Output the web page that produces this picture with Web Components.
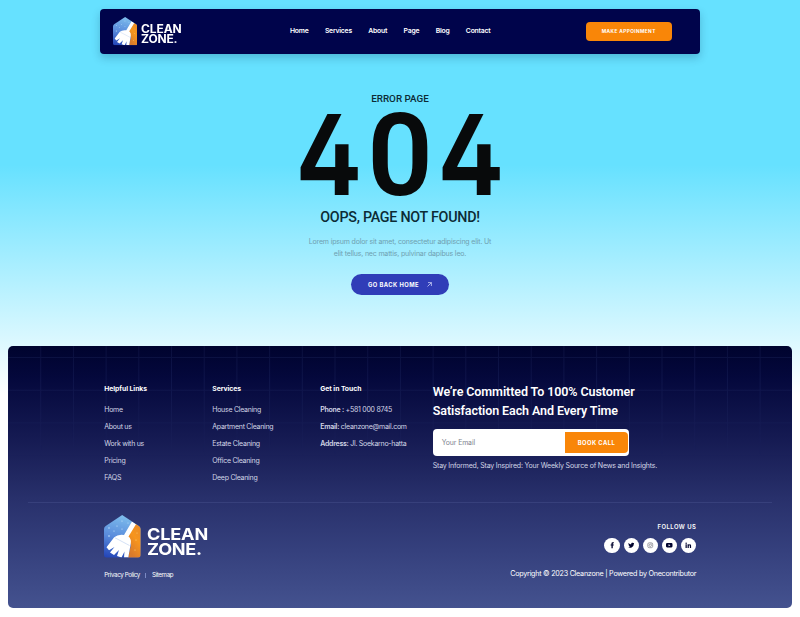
<!DOCTYPE html>
<html lang="en">
<head>
<meta charset="utf-8">
<title>Clean Zone</title>
<style>
html,body{margin:0;height:100%}
body{font-family:Inter,"Liberation Sans",sans-serif;background:#fff}
</style>
</head>
<body>
<error-page></error-page>
<script>
const define = (name, html, init) => customElements.define(name, class extends HTMLElement {
  constructor() {
    super();
    this.attachShadow({mode: 'open'});
  }
  connectedCallback() {
    this.shadowRoot.innerHTML = html;
    if (init) init(this, this.shadowRoot);
  }
});

define('cz-logo', `
<style>
:host{display:flex;align-items:flex-start;--u:1px}
svg{display:block;width:calc(var(--u)*36.5);height:calc(var(--u)*43)}
.t{color:#fff;margin-left:calc(var(--u)*6);padding-top:calc(var(--u)*12);font:700 calc(var(--u)*16.6)/calc(var(--u)*14.9) Inter,sans-serif;transform:scaleX(1.09);transform-origin:0 0}
.t div{white-space:nowrap}
.a{letter-spacing:calc(var(--u)*-.15)}
.b{letter-spacing:calc(var(--u)*-.25)}
</style>
<svg viewBox="0 0 36.5 43">
<defs>
<linearGradient id="b" x1=".4" y1="0" x2=".2" y2="1"><stop offset="0" stop-color="#7dbcec"/><stop offset=".5" stop-color="#5a8cdc"/><stop offset="1" stop-color="#2446b8"/></linearGradient>
<linearGradient id="o" x1="1" y1="0" x2=".5" y2="1"><stop offset="0" stop-color="#e78a2c"/><stop offset=".5" stop-color="#f7951d"/><stop offset="1" stop-color="#d97a2c"/></linearGradient>
<clipPath id="c"><path d="M18.2 0 L34.8 11 Q36.5 12.2 36.5 14 V40 Q36.5 42.5 34 42.5 H2.5 Q0 42.5 0 40 V14 Q0 12.2 1.7 11Z"/></clipPath>
</defs>
<g clip-path="url(#c)">
<path fill="url(#b)" d="M0 0H37V43H0z"/>
<path fill="url(#o)" d="M31.5 8.500 37 12V43H24L27 30 23.500 22Z"/>
<g fill="#c9e8ff"><circle cx="18" cy="6" r=".6"/><circle cx="13" cy="11" r=".6"/><circle cx="5" cy="13" r=".7"/><circle cx="10" cy="16" r=".6"/><circle cx="18" cy="14" r=".6"/><circle cx="5" cy="21" r=".8"/><circle cx="12" cy="22" r=".6"/><circle cx="24" cy="8" r=".5"/></g>
<g fill="#ffd27c"><circle cx="32" cy="25" r=".6"/><circle cx="31" cy="35" r=".6"/><circle cx="33" cy="18" r=".5"/></g>
<path fill="#fff" d="M28 6.500 32 9.200 24.500 21.500Q27.500 24 26.800 28L24.300 42.500H20L20.500 36.500 17.500 42.500 13 41 15 35 10 40 6 37.500 10.500 32 5 35.200 2.500 32.200 10 22.500Q14 19 20 20Z"/>
<path stroke="#b7cdf0" stroke-width=".6" fill="none" d="M11 22.800 25.500 30.500"/>
</g>
</svg>
<div class="t"><div class="a">CLEAN</div><div class="b">ZONE.</div></div>
`);

define('cz-header', `
<style>
:host{display:block;box-sizing:border-box;width:600px;height:44.500px;margin:0 auto;background:#00044b;border-radius:4px;box-shadow:0 4px 8px rgba(0,50,80,.24)}
.row{display:flex;height:100%;align-items:center;padding:0 28px 0 13px}
cz-logo{--u:.665px;width:177px;align-self:flex-start;padding-top:8.300px}
nav{display:flex;gap:16.400px;flex:1;color:#fff;font:600 6.800px/10px Inter,sans-serif;letter-spacing:-.21px}
.cta{width:86.500px;height:19.500px;border-radius:4px;background:#f98608;color:#fff;font:700 4.800px/19.500px Inter,sans-serif;letter-spacing:.38px;text-align:center}
</style>
<div class="row"><cz-logo></cz-logo>
<nav><span>Home</span><span>Services</span><span>About</span><span>Page</span><span>Blog</span><span>Contact</span></nav>
<div class="cta">MAKE APPOINMENT</div></div>
`);

define('cz-hero', `
<style>
:host{display:flex;flex-direction:column;align-items:center;color:#0c2b35;text-align:center}
.e{font:500 9.850px/12px Roboto,sans-serif;margin-top:39px}
.n{display:flex;justify-content:space-between;width:200px;height:83px;margin-top:8.500px;color:#080a0b;white-space:nowrap}
.n span{display:flex;justify-content:center;width:58px;font:680 111px/83px Inter,sans-serif;font-feature-settings:"cv02";transform:scaleX(.885)}
.n .z{font:640 115px/86px Roboto,sans-serif;transform:none}
.o{font:500 14.300px/18px Roboto,sans-serif;margin-top:12px;letter-spacing:-.26px}
p{margin:10px 0 0;font:400 7px/12px Inter,sans-serif;letter-spacing:-.165px;color:#6fa0b0}
.btn{display:flex;align-items:center;justify-content:center;gap:8px;width:97.500px;height:21px;border-radius:11px;background:#303db8;color:#fff;margin-top:14px;font:700 5.800px/21px Inter,sans-serif;letter-spacing:.46px}
svg{width:5px;height:5px}
</style>
<div class="e">ERROR PAGE</div><div class="n"><span>4</span><span class="z">0</span><span>4</span></div><div class="o">OOPS, PAGE NOT FOUND!</div>
<p>Lorem ipsum dolor sit amet, consectetur adipiscing elit. Ut<br>elit tellus, nec mattis, pulvinar dapibus leo.</p>
<div class="btn"><span>GO BACK HOME</span><svg viewBox="0 0 5 5" fill="none" stroke="#dfe3ff" stroke-width=".7"><path d="M.5 4.500 4.400.6M1 .6H4.400V4"/></svg></div>
`);

define('cz-links', `
<style>
:host{display:block;color:#d3d6e6;font:400 7px/17px Inter,sans-serif;letter-spacing:-.265px}
h4{margin:0 0 8.300px;font:700 6.800px/9px Inter,sans-serif;color:#fff;letter-spacing:-.04px}
::slotted(div){white-space:nowrap}
</style><h4></h4><slot></slot>
`, (el, root) => { root.querySelector('h4').textContent = el.getAttribute('heading'); });

define('cz-newsletter', `
<style>
:host{display:block}
h2{margin:0;color:#fff;font:600 12.500px/19px Roboto,sans-serif;letter-spacing:-.09px;white-space:nowrap}
.f{box-sizing:border-box;display:flex;justify-content:space-between;align-items:center;width:196.500px;height:26.500px;margin-top:9.700px;background:#fff;border-radius:4px;padding:0 1.500px 0 9px;font:400 6.900px/20px Inter,sans-serif;letter-spacing:-.1px;color:#7d7f8c}
.b{width:62.500px;height:21px;background:#f98608;border-radius:0 4px 4px 0;color:#fff;text-align:center;font:700 5.800px/21px Inter,sans-serif;letter-spacing:.45px}
p{margin:5.500px 0 0;color:#d3d6e6;font:400 7px/10px Inter,sans-serif;letter-spacing:-.19px;white-space:nowrap}
</style>
<h2>We’re Committed To 100% Customer<br>Satisfaction Each And Every Time</h2>
<div class="f"><span>Your Email</span><div class="b">BOOK CALL</div></div>
<p>Stay Informed, Stay Inspired: Your Weekly Source of News and Insights.</p>
`);

define('cz-social', `
<style>
:host{display:flex;gap:4px}
i{display:flex;align-items:center;justify-content:center;width:15.200px;height:15.200px;border-radius:50%;background:#fff}
svg{width:6.500px;height:6.500px;fill:#00032e}
</style>
<i><svg viewBox="0 0 24 24"><path d="M9 23V13H6V9h3V6.500C9 2.800 11 1 14.500 1H18v4h-2.200C14.300 5 14 5.700 14 7v2h4l-.6 4H14v10z"/></svg></i>
<i><svg viewBox="0 0 24 24"><path d="M23.600 4.900c-.8.400-1.700.6-2.700.7 1-.6 1.700-1.500 2-2.600-.9.500-1.900.9-3 1.100a4.700 4.700 0 0 0-8 4.300C8 8.200 4.500 6.300 2.200 3.400c-1.300 2.200-.6 5 1.500 6.300-.8 0-1.500-.2-2.100-.6 0 2.300 1.600 4.300 3.800 4.700-.7.200-1.400.2-2.100.1.600 1.900 2.300 3.200 4.400 3.300A9.500 9.500 0 0 1 .7 19.100 13.400 13.400 0 0 0 21.300 7.200c.9-.6 1.700-1.400 2.300-2.300z"/></svg></i>
<i><svg viewBox="0 0 24 24" style="fill:none;stroke:#85858c;stroke-width:2.800"><rect x="3" y="3" width="18" height="18" rx="5"/><circle cx="12" cy="12" r="4.500"/><circle cx="17" cy="7" r=".4"/></svg></i>
<i><svg viewBox="0 0 24 24"><path fill-rule="evenodd" d="M4 4H20Q24 4 24 8V16Q24 20 20 20H4Q0 20 0 16V8Q0 4 4 4ZM9.500 8V16L16.500 12Z"/></svg></i>
<i><svg viewBox="0 0 24 24"><path d="M2 8.500H6.500V22H2zM9.500 8.500H14V10.300C16.500 6.800 22.500 7.500 22.500 14V22H18V14.500C18 11 14 11.200 14 14.500V22H9.500z"/><circle cx="4.250" cy="4.500" r="2.600"/></svg></i>
`);

define('cz-footer', `
<style>
:host{display:block;position:relative;box-sizing:border-box;width:783.500px;height:261.500px;border-radius:5px;overflow:hidden;background:linear-gradient(#00032e 0,#04083c 12%,#151a52 35%,#28306b 58%,#35407d 78%,#44528f 100%)}
.grid{position:absolute;top:0;left:0;width:100%;height:112px;-webkit-mask-image:linear-gradient(#000 30%,transparent)}
.in{position:relative;padding:0 95.500px 0 96px}
.top{display:grid;grid-template-columns:108px 108px 112.500px 1fr;height:156px}
cz-links{padding-top:38px}
cz-newsletter{padding-top:35.800px}
.hr{height:1px;margin:0 20px;background:rgba(140,155,220,.14)}
.bot{display:flex;justify-content:space-between}
.l{padding-top:12px}
.pp{display:flex;align-items:center;gap:5.600px;margin-top:12px;color:#fff;font:400 6.200px/10px Inter,sans-serif;letter-spacing:-.38px}
.pp i{width:1px;height:5px;background:#7c8ac4}
.r{display:flex;flex-direction:column;align-items:flex-end;color:#fff;padding-top:19px}
.fo{font:600 5.900px/10px Inter,sans-serif;letter-spacing:.45px;margin-bottom:6px}
.c{font:400 7.200px/10px Inter,sans-serif;letter-spacing:-.26px;margin-top:16.300px}
b{font-weight:600}
</style>
<svg class="grid"><defs><pattern id="g" x="32.200" y="11" width="32.700" height="32.700" patternUnits="userSpaceOnUse"><path d="M0 0H32.700V1H1V32.700H0Z" fill="#8296e6" fill-opacity=".085"/></pattern></defs><rect width="100%" height="100%" fill="url(#g)"/></svg>
<div class="in"><div class="top">
<cz-links heading="Helpful Links"><div>Home</div><div>About us</div><div>Work with us</div><div>Pricing</div><div>FAQS</div></cz-links>
<cz-links heading="Services"><div>House Cleaning</div><div>Apartment Cleaning</div><div>Estate Cleaning</div><div>Office Cleaning</div><div>Deep Cleaning</div></cz-links>
<cz-links heading="Get in Touch"><div><b>Phone :</b> +581 000 8745</div><div><b>Email:</b> cleanzone@mail.com</div><div><b>Address:</b> Jl. Soekarno-hatta</div></cz-links>
<cz-newsletter></cz-newsletter></div></div>
<div class="hr"></div>
<div class="in bot"><div class="l"><cz-logo></cz-logo><div class="pp"><span>Privacy Policy</span><i></i><span>Sitemap</span></div></div>
<div class="r"><div class="fo">FOLLOW US</div><cz-social></cz-social><div class="c">Copyright © 2023 Cleanzone | Powered by Onecontributor</div></div></div>
`);

define('error-page', `
<style>
:host{display:block;box-sizing:border-box;height:617px;padding-top:9px;overflow:hidden;background:linear-gradient(#66e1ff 0,#66e1ff 165px,#fff 395px)}
cz-hero{height:292.500px}
cz-footer{margin:0 auto}
</style>
<cz-header></cz-header><cz-hero></cz-hero><cz-footer></cz-footer>
`);
</script>
</body>
</html>
